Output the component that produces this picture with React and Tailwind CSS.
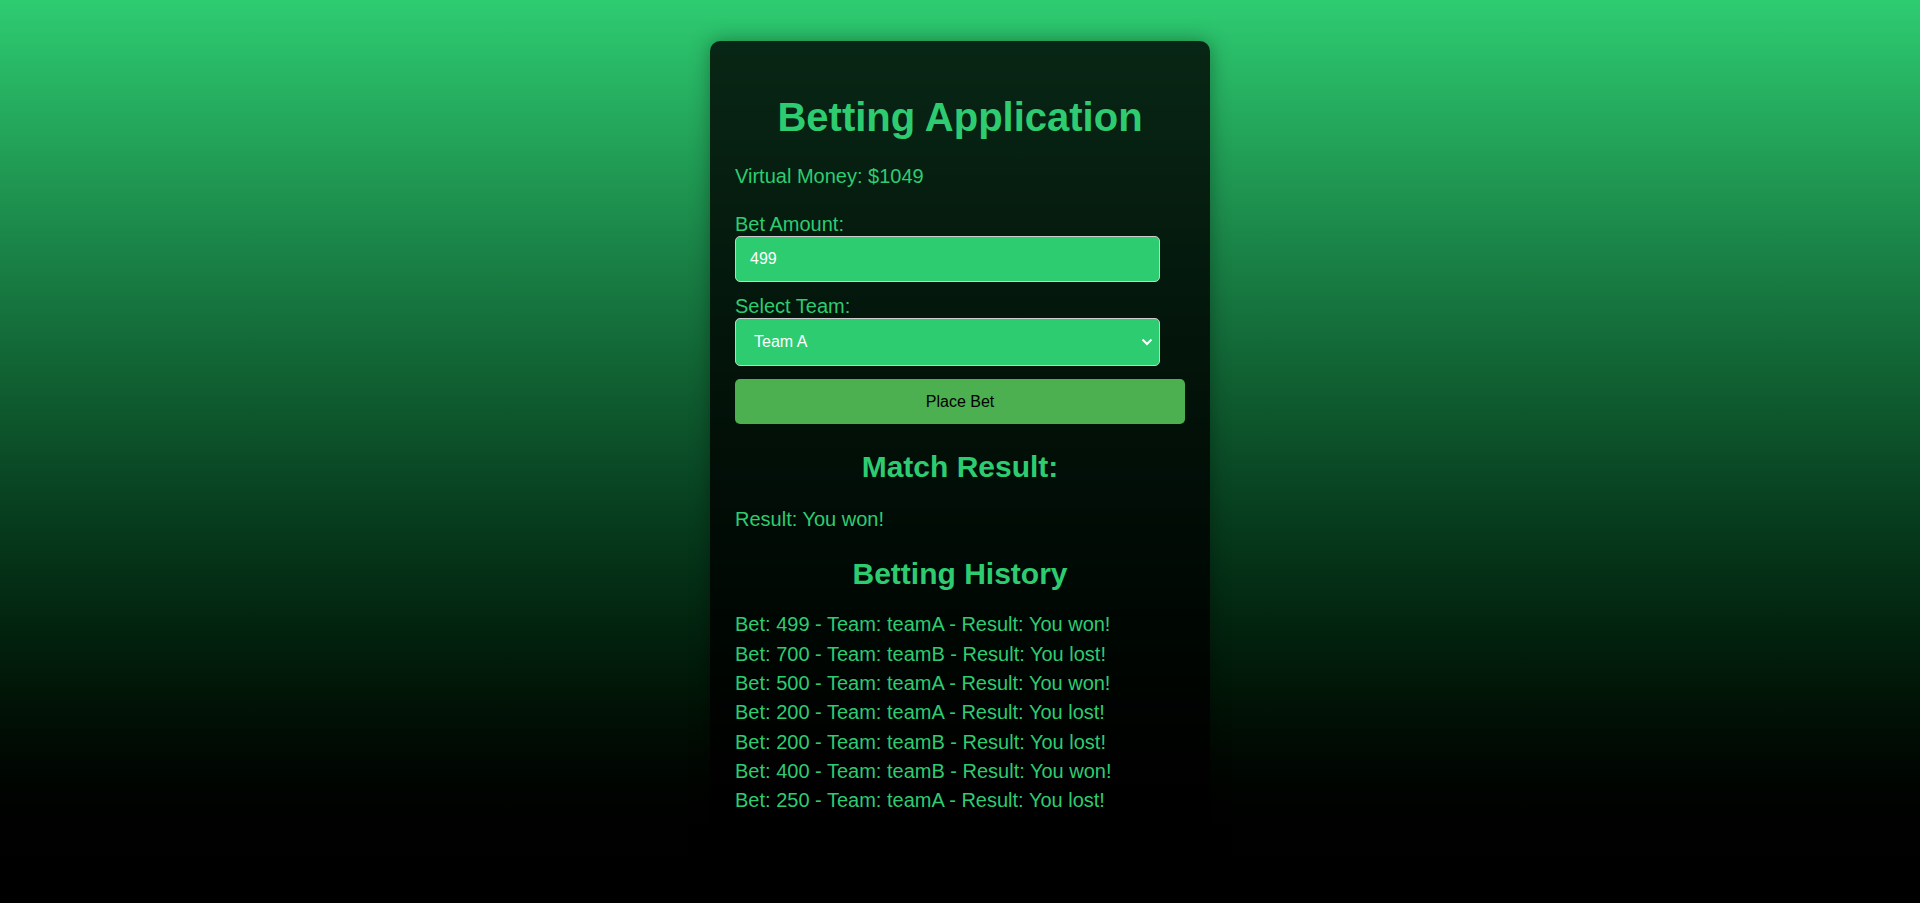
import React, { useState } from 'react'

const history = [
  { bet: 499, team: 'teamA', result: 'You won!' },
  { bet: 700, team: 'teamB', result: 'You lost!' },
  { bet: 500, team: 'teamA', result: 'You won!' },
  { bet: 200, team: 'teamA', result: 'You lost!' },
  { bet: 200, team: 'teamB', result: 'You lost!' },
  { bet: 400, team: 'teamB', result: 'You won!' },
  { bet: 250, team: 'teamA', result: 'You lost!' },
]

export default function App() {
  const [amount, setAmount] = useState('499')
  const [team, setTeam] = useState('teamA')

  return (
    <div className="flex min-h-screen items-center justify-center bg-gradient-to-b from-[#2ecc71] to-black font-['Liberation_Sans',Arial,sans-serif] text-[#2ecc71]">
      <div className="w-[500px] rounded-[10px] bg-black/80 px-[25px] pt-[53px] pb-[46px] shadow-[0_0_20px_rgba(0,0,0,0.35)]">
        <h1 className="text-center text-[40px] font-bold leading-[46px]">Betting Application</h1>

        <p className="mt-[25px] text-[20px] leading-[23px]">Virtual Money: $1049</p>

        <label className="mt-[25px] block text-[20px] leading-[23px]">Bet Amount:</label>
        <input
          type="number"
          value={amount}
          onChange={(e) => setAmount(e.target.value)}
          className="block h-[46px] w-[425px] appearance-none rounded-[5px] border border-[#cccccc] bg-[#2ecc71] px-[14px] text-[16px] text-white outline-none [&::-webkit-inner-spin-button]:appearance-none"
        />

        <label className="mt-[13px] block text-[20px] leading-[23px]">Select Team:</label>
        <div className="relative w-[425px]">
          <select
            value={team}
            onChange={(e) => setTeam(e.target.value)}
            className="block h-[48px] w-full appearance-none rounded-[5px] border border-[#cccccc] bg-[#2ecc71] pl-[18px] text-[16px] text-white outline-none"
          >
            <option value="teamA">Team A</option>
            <option value="teamB">Team B</option>
          </select>
          <svg
            className="pointer-events-none absolute right-[7px] top-[20px]"
            width="12"
            height="8"
            viewBox="0 0 12 8"
            fill="none"
            stroke="white"
            strokeWidth="2"
          >
            <path d="M1.5 1.5 L6 6 L10.5 1.5" />
          </svg>
        </div>

        <button className="mt-[13px] block h-[45px] w-full rounded-[5px] bg-[#4caf50] text-[16px] text-black">
          Place Bet
        </button>

        <h2 className="mt-[25px] text-center text-[30px] font-bold leading-[35px]">Match Result:</h2>
        <p className="mt-[24px] text-[20px] leading-[23px]">Result: You won!</p>

        <h2 className="mt-[25px] text-center text-[30px] font-bold leading-[35px]">Betting History</h2>
        <ul className="mt-[19px]">
          {history.map((h, i) => (
            <li key={i} className="text-[20px] leading-[29.33px]">
              Bet: {h.bet} - Team: {h.team} - Result: {h.result}
            </li>
          ))}
        </ul>
      </div>
    </div>
  )
}
